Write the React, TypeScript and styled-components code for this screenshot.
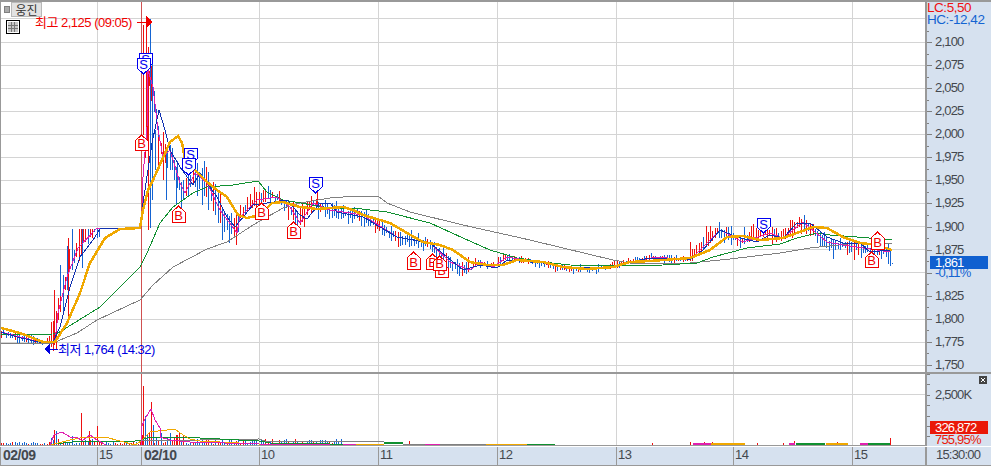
import styled, { createGlobalStyle } from "styled-components";

type Pt = [number, number];

const GlobalStyle = createGlobalStyle`
  html, body { margin: 0; padding: 0; background: #fff; }
  body { font-family: "Liberation Sans", "Noto Sans CJK KR", sans-serif; }
`;

const AXIS_BG = "#d6e1ef";
const RULE = "#999999";
const GRID = "#d4d4d4";
const INK = "#44484e";

const Frame = styled.div`
  width: 991px;
  height: 466px;
  display: flex;
  flex-direction: column;
  overflow: hidden;
  background: #fff;
`;
const Top = styled.div`
  display: flex;
  height: 446px;
  flex: none;
`;
const Panes = styled.div`
  width: 925px;
  display: flex;
  flex-direction: column;
`;
const PricePane = styled.div`
  position: relative;
  height: 372px;
  box-sizing: border-box;
  border-top: 2px solid ${RULE};
  border-left: 1px solid ${RULE};
`;
const VolumePane = styled.div`
  flex: 1;
  box-sizing: border-box;
  border-top: 2px solid ${RULE};
  border-left: 1px solid ${RULE};
`;
const Plot = styled.svg`
  display: block;
  shape-rendering: crispEdges;
`;
const SymbolChip = styled.button`
  position: absolute;
  left: 10px;
  top: 0;
  width: 31px;
  height: 15px;
  padding: 0;
  border: 1px solid #b8b8b8;
  background: #e2e2e2;
  color: #333;
  font: 12px/13px "Noto Sans CJK KR", sans-serif;
`;
const ChipDot = styled.span`
  position: absolute;
  left: 3px;
  top: 4px;
  width: 4px;
  height: 5px;
  border: 1px solid #808080;
  background: #aaa;
`;
const TableIcon = styled.svg`
  position: absolute;
  left: 5px;
  top: 18px;
`;

const Scales = styled.div`
  flex: 1;
  display: flex;
  flex-direction: column;
  background: ${AXIS_BG};
  border-left: 2px solid ${RULE};
  border-top: 2px solid ${RULE};
  box-sizing: border-box;
  font-size: 13px;
  letter-spacing: -0.8px;
`;
const PriceScale = styled.div`
  position: relative;
  height: 370px;
  flex: none;
`;
const Legend = styled.div<{ $tone: string }>`
  height: 12px;
  color: ${(p) => p.$tone};
  font-size: 13.5px;
  line-height: 12px;
  letter-spacing: -0.45px;
`;
const TickRow = styled.div`
  position: relative;
  height: 23.07px;
  display: flex;
  align-items: center;
  padding-left: 8px;
  color: ${INK};
  line-height: 12px;
  &::before {
    content: "";
    position: absolute;
    left: 0;
    top: 50%;
    width: 5px;
    height: 1px;
    background: #808080;
  }
  &::after {
    content: "";
    position: absolute;
    left: 0;
    top: 0;
    width: 2px;
    height: 1px;
    background: #808080;
  }
`;
const TickList = styled.div`
  margin-top: 4.5px;
`;
const ChangeText = styled.span`
  color: #1464d2;
`;
const LastTag = styled.div`
  position: absolute;
  left: 3px;
  top: 254px;
  width: 58px;
  height: 13px;
  padding-left: 5px;
  box-sizing: border-box;
  background: #1060d0;
  color: #fff;
  line-height: 13px;
`;
const VolumeScale = styled.div`
  position: relative;
  flex: 1;
  border-top: 2px solid ${RULE};
  background-image: repeating-linear-gradient(to bottom, #808080 0 1px, transparent 1px 10.4px);
  background-size: 3px 100%;
  background-repeat: no-repeat;
`;
const VolumeLabel = styled.div`
  padding: 13px 0 0 8px;
  height: 16px;
  line-height: 16px;
  color: ${INK};
`;
const VolumeTag = styled.div`
  margin: 18px 0 0 3px;
  width: 58px;
  height: 13px;
  padding-left: 5px;
  box-sizing: border-box;
  background: #ea1808;
  color: #fff;
  line-height: 13px;
`;
const VolumeChange = styled.div`
  margin-left: 8px;
  color: #ea1808;
  line-height: 12px;
`;
const CloseBox = styled.svg`
  position: absolute;
  right: 4px;
  top: 2px;
`;

const TimeAxis = styled.div`
  flex: 1;
  display: flex;
  margin-top: 1px;
  background: ${AXIS_BG};
  border-bottom: 1px solid ${RULE};
`;
const TimeCell = styled.div<{ $w: number; $major?: boolean }>`
  flex: none;
  width: ${(p) => p.$w}px;
  box-sizing: border-box;
  padding-left: ${(p) => (p.$major ? 2 : 1)}px;
  border-left: 1px solid ${RULE};
  color: ${INK};
  font-size: ${(p) => (p.$major ? 14 : 13)}px;
  font-weight: ${(p) => (p.$major ? 700 : 400)};
  letter-spacing: -0.5px;
  line-height: 16px;
`;
const ClockCell = styled(TimeCell)`
  padding-left: 9px;
  border-left-width: 2px;
  letter-spacing: -0.8px;
`;

const Note = styled.text<{ $tone: string }>`
  fill: ${(p) => p.$tone};
  font-family: "Liberation Sans", "Noto Sans CJK KR", sans-serif;
  font-size: 13px;
  letter-spacing: -0.5px;
  shape-rendering: auto;
`;
const MarkLetter = styled.text<{ $tone: string }>`
  fill: ${(p) => p.$tone};
  font-family: "Liberation Sans", sans-serif;
  font-size: 13px;
  font-weight: 400;
  text-anchor: middle;
`;

const hGrid = [18, 42, 65, 88, 111, 134, 157, 180, 203, 226, 249, 272, 295, 319, 342, 365];
const vGrid = [97, 259, 378, 497, 616, 733, 852];

const orange: Pt[] = [[1,328],[20,333],[43,342],[55,342],[67,323],[80,293],[90,263],[105,238],[120,229],[140,228],[143,210],[148,190],[153,180],[162,160],[170,142],[178,136],[182,143],[185,160],[195,170],[207,182],[217,190],[227,197],[238,215],[247,218],[260,215],[272,203],[283,202],[300,207],[317,209],[330,208],[343,207],[353,210],[363,215],[380,220],[390,223],[407,233],[423,242],[440,245],[453,250],[470,262],[487,265],[503,265],[517,260],[543,262],[563,267],[587,269],[613,267],[630,262],[650,261],[690,258],[710,250],[727,237],[743,236],[760,240],[783,238],[797,233],[813,227],[827,228],[843,237],[860,243],[877,245],[892,250]];
const green: Pt[] = [[1,335],[53,334],[58,333],[100,307],[140,267],[147,253],[160,223],[173,207],[193,193],[207,187],[233,185],[258,181],[267,192],[283,200],[330,208],[353,208],[387,212],[430,223],[463,238],[490,250],[517,258],[543,262],[570,265],[613,266],[663,265],[697,263],[713,257],[747,248],[780,244],[797,238],[817,233],[830,235],[857,237],[892,240]];
const gray: Pt[] = [[1,343],[53,343],[77,333],[97,320],[140,300],[153,285],[173,267],[207,249],[227,242],[253,225],[283,208],[300,203],[330,198],[357,196],[378,196],[387,203],[410,212],[463,225],[530,240],[563,248],[613,260],[630,263],[690,263],[730,259],[780,253],[810,248],[857,243],[892,243]];
const navy: Pt[] = [[1,332],[17,337],[43,343],[53,342],[60,327],[70,287],[80,257],[93,240],[100,229],[140,228],[143,203],[152,143],[159,110],[165,130],[170,150],[180,167],[193,185],[200,173],[217,197],[227,217],[235,227],[253,205],[267,203],[287,200],[300,215],[307,219],[320,203],[330,203],[337,212],[363,217],[397,237],[430,243],[447,257],[463,270],[480,265],[497,268],[507,260],[543,263],[570,268],[613,267],[630,262],[650,258],[670,258],[690,260],[703,250],[720,230],[737,237],[757,242],[770,235],[783,238],[797,223],[810,223],[827,237],[843,243],[860,243],[870,252],[890,250]];
const magenta: Pt[] = [[1,332],[43,343],[55,342],[58,313],[67,277],[78,248],[97,228],[140,228],[142,217],[143,177],[147,127],[148,70],[153,87],[158,130],[163,157],[170,150],[180,183],[185,193],[195,173],[207,183],[220,210],[237,233],[240,217],[257,200],[277,197],[290,207],[300,223],[313,203],[330,210],[363,215],[397,237],[430,243],[450,262],[470,270],[480,262],[493,267],[507,257],[543,263],[570,269],[613,267],[630,262],[657,257],[690,260],[720,230],[743,242],[770,233],[783,238],[803,222],[827,242],[843,245],[863,248],[890,252]];

const lerp = (pts: Pt[], x: number) => {
  for (let i = 1; i < pts.length; i++) {
    if (x <= pts[i][0]) {
      const [x0, y0] = pts[i - 1];
      const [x1, y1] = pts[i];
      return y0 + ((y1 - y0) * (x - x0)) / (x1 - x0 || 1);
    }
  }
  return pts[pts.length - 1][1];
};
const noise = (n: number) => {
  const v = Math.sin(n * 12.9898) * 43758.5453;
  return v - Math.floor(v);
};
const swing = (x: number) => {
  if (x < 50) return 7;
  if (x < 100) return 34;
  if (x < 141) return 0;
  if (x < 240) return 26;
  if (x < 340) return 15;
  if (x < 470) return 12;
  if (x < 690) return 6;
  return 14;
};

const RED = "#ee1010";
const BLUE = "#1464d2";

// one bar per minute, laid around the fast average
const bars: { x: number; y1: number; y2: number; c: string }[] = [];
for (let i = 0; i < 390; i++) {
  const x = Math.round(1 + i * 2.28);
  const s = swing(x);
  if (!s) continue;
  const mid = lerp(magenta, x);
  const rising = lerp(magenta, x + 4) < mid - 0.3;
  const up = noise(i) * 0.5 + (rising ? 0.5 : 0.1);
  const size = s * (0.35 + noise(i + 500));
  const c = rising ? (noise(i + 90) < 0.75 ? RED : BLUE) : noise(i + 90) < 0.8 ? BLUE : RED;
  const y1 = mid - size * up;
  bars.push({ x, y1: x < 141 ? Math.max(y1, 229) : y1, y2: mid + size * (1 - up), c });
}
const spike: [number, number, number, string][] = [
  [143, 25, 135, RED], [146, 25, 130, RED], [148, 47, 230, RED], [150, 19, 228, BLUE], [152, 57, 200, BLUE],
  [155, 130, 170, BLUE], [158, 137, 168, RED], [163, 135, 180, RED], [166, 150, 200, BLUE], [176, 167, 204, BLUE],
  [202, 168, 205, BLUE], [208, 172, 210, BLUE], [54, 290, 345, RED], [60, 265, 296, BLUE], [68, 238, 320, RED],
  [82, 229, 268, BLUE], [317, 190, 205, RED], [890, 250, 266, BLUE], [888, 244, 264, BLUE],
];

const volBars: { x: number; h: number; c: string }[] = [];
for (let i = 0; i < 150; i++) {
  const x = Math.round(1 + i * 2.28);
  const max = x < 50 ? 2 : x < 100 ? 10 : x < 141 ? 3 : x < 190 ? 12 : 5;
  volBars.push({ x, h: 1 + max * noise(i + 31), c: noise(i + 7) < 0.4 ? RED : BLUE });
}
const volSpikes: [number, number, string][] = [
  [54, 430, RED], [56, 431, BLUE], [81, 413, RED], [97, 426, RED], [89, 431, RED], [143, 386, RED], [145, 416, BLUE],
  [151, 402, RED], [153, 425, BLUE], [176, 435, RED], [652, 443, RED], [690, 442, RED], [704, 442, RED], [712, 442, RED],
  [757, 443, RED], [783, 443, RED], [794, 441, RED], [837, 442, RED], [890, 438, RED], [409, 441, RED],
];
const volStrips: [number, number, string, number][] = [
  [330, 343, "#109030", 445], [343, 356, "#e020b0", 445], [356, 384, "#f0a800", 445], [384, 403, "#109030", 443],
  [425, 440, "#e020b0", 445], [486, 527, "#f0a800", 445], [527, 555, "#109030", 445], [693, 711, "#e020b0", 444],
  [711, 745, "#f0a800", 444], [789, 795, "#e020b0", 444], [796, 825, "#109030", 444], [826, 848, "#f0a800", 444],
  [860, 868, "#e020b0", 444], [868, 890, "#109030", 444],
];
const volMagenta: Pt[] = [[1,445],[50,445],[54,435],[62,432],[70,437],[77,437],[82,441],[90,435],[97,440],[106,445],[141,445],[141,428],[146,417],[151,409],[155,420],[160,428],[160,437],[170,440],[190,442],[259,444],[330,445]];
const volOrange: Pt[] = [[1,445],[50,445],[70,440],[85,437],[105,437],[120,441],[135,445],[141,441],[150,432],[175,429],[180,433],[190,439],[200,441],[259,444],[330,444]];
const volGreen: Pt[] = [[55,444],[80,441],[135,441],[141,440],[150,437],[170,437],[200,438],[259,441],[270,443],[330,444]];
const volGray: Pt[] = [[141,441],[259,439],[265,441],[330,441],[378,441],[384,442],[403,444],[555,444]];

const asPoints = (pts: Pt[]) => pts.map((p) => p.join(",")).join(" ");

interface MarkProps {
  kind: "B" | "S";
  x: number;
  tip: number;
  end: number;
}
function Mark({ kind, x, tip, end }: MarkProps) {
  const tone = kind === "B" ? "#f00000" : "#0000f0";
  const dir = kind === "B" ? 6 : -6;
  const shape = [[x, tip], [x + 6.5, tip + dir], [x + 6.5, end], [x - 6.5, end], [x - 6.5, tip + dir]];
  return (
    <g>
      <polygon points={shape.map((p) => p.join(",")).join(" ")} fill="#fff" stroke={tone} />
      <MarkLetter $tone={tone} x={x} y={kind === "B" ? end - 2 : end + 11}>
        {kind}
      </MarkLetter>
    </g>
  );
}

const marks: MarkProps[] = [
  { kind: "S", x: 145.5, tip: 70, end: 53 },
  { kind: "S", x: 143.5, tip: 74, end: 58 },
  { kind: "B", x: 141.5, tip: 135, end: 150 },
  { kind: "S", x: 190.5, tip: 165, end: 148 },
  { kind: "S", x: 188.5, tip: 175, end: 158 },
  { kind: "B", x: 178.5, tip: 206, end: 222 },
  { kind: "B", x: 261.5, tip: 203, end: 219 },
  { kind: "B", x: 293.5, tip: 222, end: 238 },
  { kind: "S", x: 315.5, tip: 193, end: 177 },
  { kind: "B", x: 413.5, tip: 252, end: 269 },
  { kind: "B", x: 441.5, tip: 262, end: 277 },
  { kind: "B", x: 432.5, tip: 254, end: 269 },
  { kind: "B", x: 439.5, tip: 256, end: 270 },
  { kind: "S", x: 763.5, tip: 233, end: 218 },
  { kind: "B", x: 871.5, tip: 252, end: 267 },
  { kind: "B", x: 877.5, tip: 232, end: 249 },
];

const ticks = ["2,100", "2,075", "2,050", "2,025", "2,000", "1,975", "1,950", "1,925", "1,900", "1,875"];
const lowerTicks = ["1,825", "1,800", "1,775", "1,750"];
const times: { label: string; w: number; major?: boolean }[] = [
  { label: "02/09", w: 97, major: true },
  { label: "15", w: 44 },
  { label: "02/10", w: 118, major: true },
  { label: "10", w: 119 },
  { label: "11", w: 119 },
  { label: "12", w: 119 },
  { label: "13", w: 117 },
  { label: "14", w: 119 },
  { label: "15", w: 73 },
];

export default function App() {
  return (
    <Frame>
      <GlobalStyle />
      <Top>
        <Panes>
          <PricePane>
            <Plot width={924} height={370} viewBox="1 2 924 370">
              {hGrid.map((y) => (
                <line key={y} x1={0} x2={925} y1={y} y2={y} stroke={GRID} />
              ))}
              {vGrid.map((x) => (
                <line key={x} x1={x} x2={x} y1={0} y2={372} stroke={GRID} />
              ))}
              <line x1={141} x2={141} y1={0} y2={372} stroke="#d05050" />
              {bars.map((b, i) => (
                <line key={i} x1={b.x} x2={b.x} y1={b.y1} y2={b.y2} stroke={b.c} />
              ))}
              {spike.map(([x, y1, y2, c], i) => (
                <line key={i} x1={x} x2={x} y1={y1} y2={y2} stroke={c} />
              ))}
              <polyline points={asPoints(gray)} fill="none" stroke="#808080" />
              <polyline points={asPoints(green)} fill="none" stroke="#109030" />
              <polyline points={asPoints(magenta)} fill="none" stroke="#e020b0" />
              <polyline points={asPoints(navy)} fill="none" stroke="#1030b0" />
              <polyline points={asPoints(orange)} fill="none" stroke="#f0a800" strokeWidth={2.5} />
              <rect x={892} y={263} width={1} height={1} fill={BLUE} />
              {marks.map((m) => (
                <Mark key={`${m.x}${m.tip}`} {...m} />
              ))}
              <Note $tone="#f00000" x={35} y={27}>최고 2,125 (09:05)</Note>
              <line x1={137} x2={147} y1={22} y2={22} stroke="#f00000" />
              <polygon points="146,16 152,22 146,28" fill="#f00000" />
              <Note $tone="#0000e0" x={58} y={354}>최저 1,764 (14:32)</Note>
              <line x1={48} x2={58} y1={349} y2={349} stroke="#0000e0" />
              <polygon points="50,343 44,349 50,355" fill="#0000e0" />
            </Plot>
            <ChipDot />
            <SymbolChip>웅진</SymbolChip>
            <TableIcon width={15} height={15} viewBox="0 0 15 15">
              <rect x={0.5} y={0.5} width={13} height={13} fill="#fff" stroke="#000" />
              <rect x={2} y={2} width={10} height={10} fill="#c8c8c8" />
              <path d="M2 5.5h10M2 8.5h10M5.5 2v10M8.5 2v10" stroke="#777" fill="none" />
            </TableIcon>
          </PricePane>
          <VolumePane>
            <Plot width={924} height={72} viewBox="1 374 924 72">
              <line x1={0} x2={925} y1={394} y2={394} stroke={GRID} />
              {vGrid.map((x) => (
                <line key={x} x1={x} x2={x} y1={372} y2={445} stroke={GRID} />
              ))}
              <line x1={141} x2={141} y1={372} y2={445} stroke="#d05050" />
              {volBars.map((b, i) => (
                <line key={i} x1={b.x} x2={b.x} y1={445 - b.h} y2={445} stroke={b.c} />
              ))}
              {volSpikes.map(([x, y, c], i) => (
                <line key={i} x1={x} x2={x} y1={y} y2={445} stroke={c} />
              ))}
              <polyline points={asPoints(volGray)} fill="none" stroke="#808080" />
              <polyline points={asPoints(volGreen)} fill="none" stroke="#109030" />
              <polyline points={asPoints(volOrange)} fill="none" stroke="#f0a800" />
              <polyline points={asPoints(volMagenta)} fill="none" stroke="#e020b0" />
              {volStrips.map(([x1, x2, c, y], i) => (
                <line key={i} x1={x1} x2={x2} y1={y} y2={y} stroke={c} strokeWidth={2} />
              ))}
              <line x1={0} x2={925} y1={445.5} y2={445.5} stroke={RULE} strokeWidth={1.5} />
            </Plot>
          </VolumePane>
        </Panes>
        <Scales>
          <PriceScale>
            <Legend $tone="#f01010">LC:5,50</Legend>
            <Legend $tone="#1464d2">HC:-12,42</Legend>
            <TickList>
              {ticks.map((t) => (
                <TickRow key={t}>{t}</TickRow>
              ))}
              <TickRow>
                <ChangeText>-0,11%</ChangeText>
              </TickRow>
              {lowerTicks.map((t) => (
                <TickRow key={t}>{t}</TickRow>
              ))}
            </TickList>
            <LastTag>1,861</LastTag>
          </PriceScale>
          <VolumeScale>
            <VolumeLabel>2,500K</VolumeLabel>
            <VolumeTag>326,872</VolumeTag>
            <VolumeChange>755,95%</VolumeChange>
            <CloseBox width={8} height={8} viewBox="0 0 8 8">
              <rect width={8} height={8} fill="#444" />
              <path d="M2 2l4 4M6 2L2 6" stroke="#fff" fill="none" />
            </CloseBox>
          </VolumeScale>
        </Scales>
      </Top>
      <TimeAxis>
        {times.map((t, i) => (
          <TimeCell key={i} $w={t.w} $major={t.major}>
            {t.label}
          </TimeCell>
        ))}
        <ClockCell $w={66}>15:30:00</ClockCell>
      </TimeAxis>
    </Frame>
  );
}
